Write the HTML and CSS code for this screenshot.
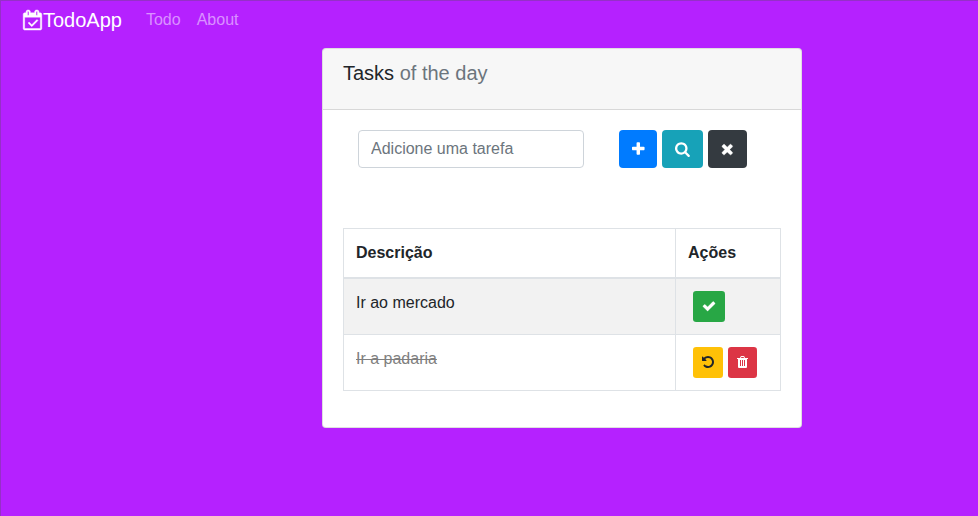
FILE: index.html
```html
<!DOCTYPE html>
<html lang="pt-BR">
<head>
<meta charset="utf-8">
<title>TodoApp</title>
<link rel="stylesheet" href="styles.css">
</head>
<body>
<nav class="navbar">
  <a class="brand"><svg class="icon bold" viewBox="0 0 1664 1792"><path d="M1303 964l-512 512q-10 9-23 9t-23-9l-288-288q-9-10-9-23t9-22l46-46q9-9 22-9t23 9l220 220 444-444q10-9 23-9t22 9l46 46q9 9 9 22t-9 23zm-1175 700h1408v-1024h-1408v1024zm384-1216v-288q0-14-9-23t-23-9h-64q-14 0-23 9t-9 23v288q0 14 9 23t23 9h64q14 0 23-9t9-23zm768 0v-288q0-14-9-23t-23-9h-64q-14 0-23 9t-9 23v288q0 14 9 23t23 9h64q14 0 23-9t9-23zm384-64v1280q0 52-38 90t-90 38h-1408q-52 0-90-38t-38-90v-1280q0-52 38-90t90-38h128v-96q0-66 47-113t113-47h64q66 0 113 47t47 113v96h384v-96q0-66 47-113t113-47h64q66 0 113 47t47 113v96h128q52 0 90 38t38 90z"/></svg>TodoApp</a>
  <a class="nav-link">Todo</a>
  <a class="nav-link">About</a>
</nav>
<main class="card">
  <header class="card-header">
    <h1 class="title">Tasks <small>of the day</small></h1>
  </header>
  <div class="card-body">
    <form class="task-form">
      <input class="form-control" type="text" placeholder="Adicione uma tarefa">
      <div class="buttons">
        <button type="button" class="btn primary"><svg class="icon" viewBox="192 0 1408 1792"><path d="M1600 736v192q0 40-28 68t-68 28h-416v416q0 40-28 68t-68 28h-192q-40 0-68-28t-28-68v-416h-416q-40 0-68-28t-28-68v-192q0-40 28-68t68-28h416v-416q0-40 28-68t68-28h192q40 0 68 28t28 68v416h416q40 0 68 28t28 68z"/></svg></button>
        <button type="button" class="btn info"><svg class="icon" viewBox="64 0 1664 1792"><path d="M1216 832q0-185-131.5-316.5t-316.5-131.5-316.5 131.5-131.5 316.5 131.5 316.5 316.5 131.5 316.5-131.5 131.5-316.5zm512 832q0 52-38 90t-90 38q-54 0-90-38l-343-342q-179 124-399 124-143 0-273.5-55.5t-225-150-150-225-55.5-273.5 55.5-273.5 150-225 225-150 273.5-55.5 273.5 55.5 225 150 150 225 55.5 273.5q0 220-124 399l343 343q37 37 37 90z"/></svg></button>
        <button type="button" class="btn dark"><svg class="icon bold" viewBox="192 0 1408 1792"><path d="M1490 1322q0 40-28 68l-136 136q-28 28-68 28t-68-28l-294-294-294 294q-28 28-68 28t-68-28l-136-136q-28-28-28-68t28-68l294-294-294-294q-28-28-28-68t28-68l136-136q28-28 68-28t68 28l294 294 294-294q28-28 68-28t68 28l136 136q28 28 28 68t-28 68l-294 294 294 294q28 28 28 68z"/></svg></button>
      </div>
    </form>
    <table class="table">
      <thead>
        <tr><th>Descrição</th><th class="actions-col">Ações</th></tr>
      </thead>
      <tbody>
        <tr>
          <td>Ir ao mercado</td>
          <td><div class="actions">
            <button type="button" class="btn small success"><svg class="icon bold" viewBox="0 0 1792 1792"><path d="M1671 566q0 40-28 68l-724 724-136 136q-28 28-68 28t-68-28l-136-136-362-362q-28-28-28-68t28-68l136-136q28-28 68-28t68 28l294 295 656-657q28-28 68-28t68 28l136 136q28 28 28 68z"/></svg></button>
          </div></td>
        </tr>
        <tr>
          <td class="done">Ir a padaria</td>
          <td><div class="actions">
            <button type="button" class="btn small warning"><svg class="icon" viewBox="128 0 1536 1792"><path d="M1664 896q0 156-61 298t-164 245-245 164-298 61q-172 0-327-72.5t-264-204.5q-7-10-6.5-22.5t8.5-20.5l137-138q10-9 25-9 16 2 23 12 73 95 179 147t225 52q104 0 198.5-40.5t163.5-109.5 109.5-163.5 40.5-198.5-40.5-198.5-109.5-163.5-163.5-109.5-198.5-40.5q-98 0-188 35.5t-160 101.5l137 138q31 30 14 69-17 40-59 40h-448q-26 0-45-19t-19-45v-448q0-42 40-59 39-17 69 14l130 129q107-101 244.5-156.5t284.5-55.5q156 0 298 61t245 164 164 245 61 298z"/></svg></button>
            <button type="button" class="btn small danger"><svg class="icon trash" viewBox="0 0 11 12"><path fill-rule="evenodd" d="M0 2h3l.6-1.4Q3.900 0 4.500 0h2q.6 0 .9.600L8 2h3v1h-1v8q0 1-1 1H2q-1 0-1-1V3H0zM4 2h3l-.4-1H4.400zM3 4v6h1V4zM5 4v6h1V4zM7 4v6h1V4z"/></svg></button>
          </div></td>
        </tr>
      </tbody>
    </table>
  </div>
</main>
</body>
</html>
```
FILE: styles.css
```css
* { box-sizing: border-box; }

body {
  margin: 0;
  height: 516px;
  overflow: hidden;
  background: #b521ff;
  border-top: 1px solid #9530c8;
  border-left: 1px solid #9530c8;
  font: 16px/24px "Liberation Sans", Arial, sans-serif;
  color: #212529;
}

.navbar {
  display: flex;
  align-items: center;
  height: 38px;
  padding-left: 22px;
}

.brand {
  display: flex;
  align-items: center;
  margin-right: 16px;
  font-size: 20px;
  line-height: 30px;
  color: #fff;
}

.nav-link {
  padding: 0 8px;
  color: rgba(255, 255, 255, 0.5);
}

.icon {
  display: block;
  height: 1em;
  fill: currentColor;
  overflow: visible;
}

.bold {
  stroke: currentColor;
  stroke-width: 40px;
}

.brand .icon {
  width: 19px;
  height: 20px;
  margin-right: 1px;
}

.card {
  width: 480px;
  height: 380px;
  margin: 9px 0 0 321px;
  background: #fff;
  border: 1px solid rgba(0, 0, 0, 0.125);
  border-radius: 4px;
}

.card-header {
  height: 61px;
  padding: 12px 20px;
  background: rgba(0, 0, 0, 0.03);
  border-bottom: 1px solid rgba(0, 0, 0, 0.125);
}

.title {
  margin: 0;
  font-size: 20px;
  font-weight: 400;
  line-height: 24px;
}

.title small {
  font-size: 20px;
  color: #6c757d;
}

.card-body { padding: 20px; }

.task-form {
  display: flex;
  gap: 35px;
  margin: 0 0 60px;
  padding-left: 15px;
}

.form-control {
  width: 226px;
  height: 38px;
  padding: 6px 12px;
  border: 1px solid #ced4da;
  border-radius: 4px;
  font: inherit;
}

.form-control::placeholder { color: #6c757d; opacity: 1; }

.buttons,
.actions {
  display: flex;
  gap: 5px;
}

.btn {
  display: flex;
  align-items: center;
  justify-content: center;
  height: 38px;
  padding: 0;
  border: 0;
  border-radius: 4px;
  font-size: 16px;
  color: #fff;
}

.small {
  height: 31px;
  padding-bottom: 1px;
  border-radius: 3.2px;
  font-size: 14px;
}

.trash {
  width: 11px;
  height: 12px;
}

.primary { width: 38px; background: #007bff; }
.info { width: 41px; background: #17a2b8; }
.dark { width: 39px; background: #343a40; }
.success { width: 32px; background: #28a745; }
.warning { width: 30px; background: #ffc107; color: #212529; }
.danger { width: 29px; background: #dc3545; }

.table {
  width: 438px;
  border-collapse: collapse;
  table-layout: fixed;
}

.table th,
.table td {
  padding: 12px;
  border: 1px solid #dee2e6;
  text-align: left;
  vertical-align: top;
}

.table thead th { border-bottom-width: 2px; }
.table .actions-col { width: 105px; }
.table tbody tr:nth-child(odd) { background: rgba(0, 0, 0, 0.05); }
.table .done { color: #808080; text-decoration: line-through; }
.actions { padding-left: 5px; }
```
